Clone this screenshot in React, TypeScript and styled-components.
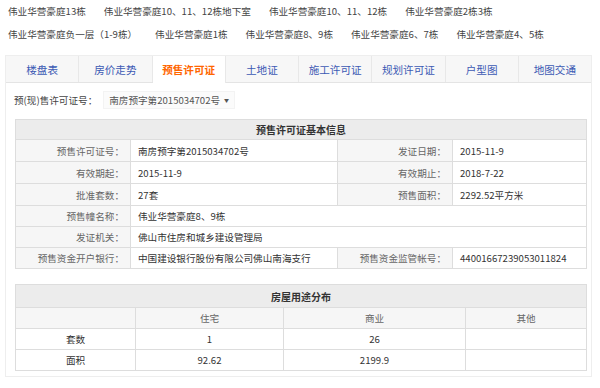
import styled, { createGlobalStyle } from 'styled-components';

const Global = createGlobalStyle`
  body {
    margin: 0;
    background: #fff;
    font-family: "Noto Sans CJK SC", "Noto Sans", sans-serif;
    color: #333;
  }
`

const Links = styled.div`
  padding: 0 0 0 8px;
  height: 46px;
`

const LinkRow = styled.div`
  display: flex;
  gap: 18px;
  height: 23px;
  line-height: 23px;
  font-size: 9.6px;
`

const Link = styled.a`
  color: #444;
  text-decoration: none;
  white-space: nowrap;
`

const Panel = styled.div`
  margin: 9px 0 0 5px;
  width: 585px;
  height: 320px;
  border: 1px solid #eee;
`

const TabBar = styled.div`
  display: flex;
  height: 26px;
  background: #f7f7f7;
  border-bottom: 1px solid #e4e4e4;
`

const Tab = styled.div<{ $active?: boolean }>`
  flex: 1;
  display: flex;
  align-items: center;
  justify-content: center;
  font-size: 10.6px;
  color: ${p => (p.$active ? '#f60' : '#3c5ab4')};
  font-weight: ${p => (p.$active ? 700 : 400)};
  background: ${p => (p.$active ? '#fff' : 'transparent')};
  border-right: 1px solid #e8e8e8;
  height: ${p => (p.$active ? '27px' : '26px')};
  &:last-child {
    border-right: none;
  }
`

const PickRow = styled.div`
  display: flex;
  align-items: center;
  margin: 8px 0 0 8px;
  height: 17px;
  font-size: 9.6px;
  color: #444;
`

const Picker = styled.div`
  display: flex;
  align-items: center;
  gap: 4px;
  margin-left: 6px;
  height: 16px;
  padding: 0 5px;
  background: #fbfbfb;
  border: 1px solid #f3f3f3;
  color: #555;
  font-size: 9.6px;
`

const Caret = styled.span`
  font-size: 5px;
  color: #555;
`

const Table = styled.table<{ $top: number }>`
  border-collapse: collapse;
  width: 571px;
  margin: ${p => p.$top}px 0 0 9px;
  table-layout: fixed;
  font-size: 9.6px;
  td, th {
    border: 1px solid #ddd;
    padding: 0;
    overflow: hidden;
    white-space: nowrap;
  }
`

const Head = styled.th<{ $h: number }>`
  background: #ececec;
  height: ${p => p.$h}px;
  font-size: 10px;
  font-weight: 700;
  color: #333;
  text-align: center;
`

const Row = styled.tr<{ $h: number }>`
  height: ${p => p.$h}px;
`

const Label = styled.td`
  background: #f6f6f6;
  color: #666;
  text-align: right;
  padding-right: 6px !important;
`

const Value = styled.td`
  color: #333;
  padding-left: 7px !important;
`

const Cell = styled.td<{ $shade?: boolean }>`
  background: ${p => (p.$shade ? '#f6f6f6' : '#fff')};
  color: ${p => (p.$shade ? '#666' : '#333')};
  text-align: center;
`

const topLinks = [
  ['伟业华营豪庭13栋', '伟业华营豪庭10、11、12栋地下室', '伟业华营豪庭10、11、12栋', '伟业华营豪庭2栋3栋'],
  ['伟业华营豪庭负一层（1-9栋）', '伟业华营豪庭1栋', '伟业华营豪庭8、9栋', '伟业华营豪庭6、7栋', '伟业华营豪庭4、5栋'],
]

const tabs = ['楼盘表', '房价走势', '预售许可证', '土地证', '施工许可证', '规划许可证', '户型图', '地图交通']

export default function App() {
  return (
    <>
      <Global />
      <Links>
        {topLinks.map((row, i) => (
          <LinkRow key={i}>
            {row.map(t => <Link key={t} href="#">{t}</Link>)}
          </LinkRow>
        ))}
      </Links>

      <Panel>
        <TabBar>
          {tabs.map(t => <Tab key={t} $active={t === '预售许可证'}>{t}</Tab>)}
        </TabBar>

        <PickRow>
          预(现)售许可证号：
          <Picker>南房预字第2015034702号<Caret>▼</Caret></Picker>
        </PickRow>

        {/* basic info */}
        <Table $top={11}>
          <colgroup>
            <col style={{ width: 115 }} />
            <col style={{ width: 207 }} />
            <col style={{ width: 115 }} />
            <col style={{ width: 134 }} />
          </colgroup>
          <tbody>
            <tr><Head $h={19} colSpan={4}>预售许可证基本信息</Head></tr>
            <Row $h={22}>
              <Label>预售许可证号：</Label><Value>南房预字第2015034702号</Value>
              <Label>发证日期：</Label><Value>2015-11-9</Value>
            </Row>
            <Row $h={22}>
              <Label>有效期起：</Label><Value>2015-11-9</Value>
              <Label>有效期止：</Label><Value>2018-7-22</Value>
            </Row>
            <Row $h={22}>
              <Label>批准套数：</Label><Value>27套</Value>
              <Label>预售面积：</Label><Value>2292.52平方米</Value>
            </Row>
            <Row $h={21}>
              <Label>预售幢名称：</Label><Value colSpan={3}>伟业华营豪庭8、9栋</Value>
            </Row>
            <Row $h={21}>
              <Label>发证机关：</Label><Value colSpan={3}>佛山市住房和城乡建设管理局</Value>
            </Row>
            <Row $h={21}>
              <Label>预售资金开户银行：</Label><Value>中国建设银行股份有限公司佛山南海支行</Value>
              <Label>预售资金监管帐号：</Label><Value>44001667239053011824</Value>
            </Row>
          </tbody>
        </Table>

        {/* usage split */}
        <Table $top={15}>
          <colgroup>
            <col style={{ width: 120 }} />
            <col style={{ width: 148 }} />
            <col style={{ width: 182 }} />
            <col style={{ width: 121 }} />
          </colgroup>
          <tbody>
            <tr><Head $h={22} colSpan={4}>房屋用途分布</Head></tr>
            <Row $h={21}>
              <Cell $shade></Cell><Cell $shade>住宅</Cell><Cell $shade>商业</Cell><Cell $shade>其他</Cell>
            </Row>
            <Row $h={21}>
              <Cell>套数</Cell><Cell>1</Cell><Cell>26</Cell><Cell></Cell>
            </Row>
            <Row $h={21}>
              <Cell>面积</Cell><Cell>92.62</Cell><Cell>2199.9</Cell><Cell></Cell>
            </Row>
          </tbody>
        </Table>
      </Panel>
    </>
  )
}
